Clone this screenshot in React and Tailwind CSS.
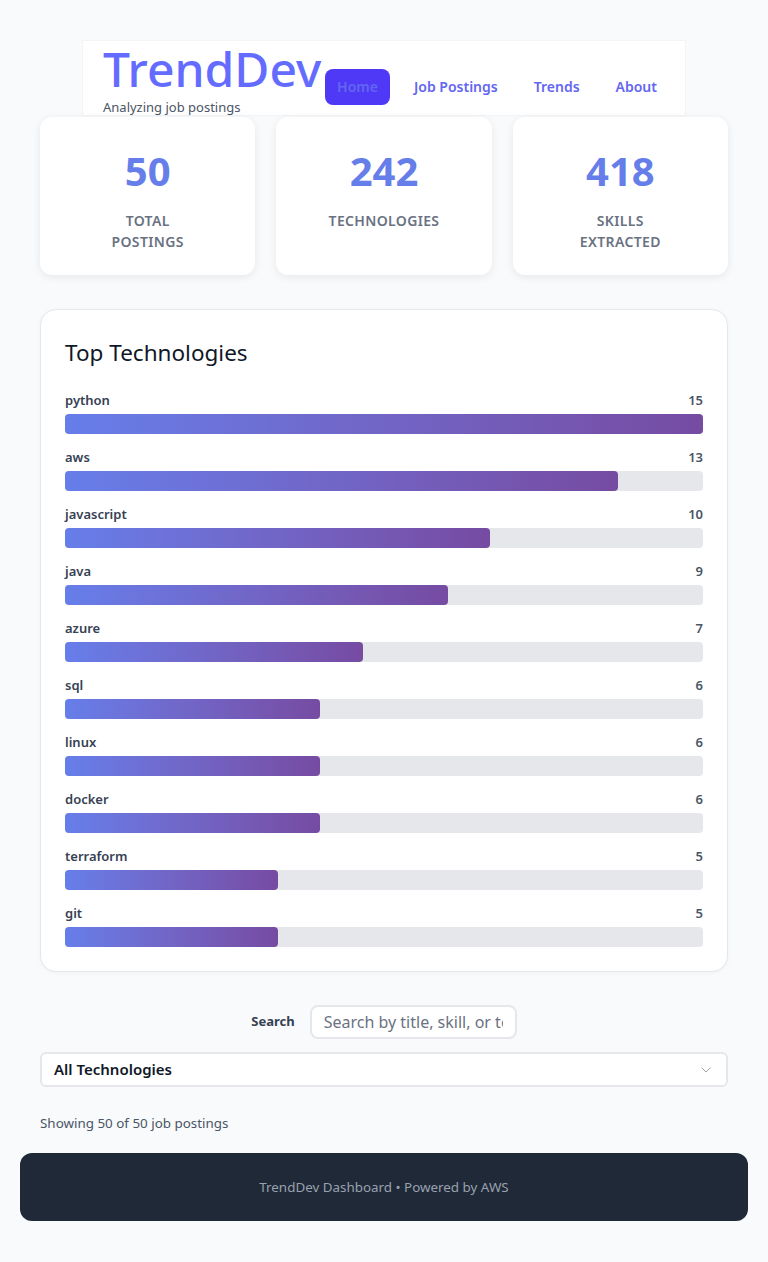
import React from 'react';
import { ChevronDown } from 'lucide-react';

const stats = [
  { value: 50, label: ['Total', 'Postings'] },
  { value: 242, label: ['Technologies'] },
  { value: 418, label: ['Skills', 'Extracted'] },
];

const technologies = [
  { name: 'python', count: 15 },
  { name: 'aws', count: 13 },
  { name: 'javascript', count: 10 },
  { name: 'java', count: 9 },
  { name: 'azure', count: 7 },
  { name: 'sql', count: 6 },
  { name: 'linux', count: 6 },
  { name: 'docker', count: 6 },
  { name: 'terraform', count: 5 },
  { name: 'git', count: 5 },
];

const font = { fontFamily: '"Segoe UI", "Noto Sans", "Open Sans", sans-serif' };

function Header() {
  return (
    <header className="mx-[42px] h-[76px] bg-white border border-gray-100 flex items-start justify-between pl-5 pr-4 pt-1">
      <div className="shrink-0">
        <h1 className="text-[48px] leading-none font-medium text-[#646cff]">TrendDev</h1>
        <p className="mt-1 text-[13px] leading-5 text-gray-600">Analyzing job postings</p>
      </div>
      <nav className="mt-6 flex gap-3 shrink-0 whitespace-nowrap">
        <a className="px-3 py-2 rounded-lg bg-[#4f39f6] text-[#6366f1] text-sm font-semibold leading-5">Home</a>
        <a className="px-3 py-2 rounded-lg text-[#6366f1] text-sm font-semibold leading-5">Job Postings</a>
        <a className="px-3 py-2 rounded-lg text-[#6366f1] text-sm font-semibold leading-5">Trends</a>
        <a className="px-3 py-2 rounded-lg text-[#6366f1] text-sm font-semibold leading-5">About</a>
      </nav>
    </header>
  );
}

function StatCard({ value, label }) {
  return (
    <div className="bg-white rounded-xl shadow-[0_2px_8px_rgba(0,0,0,0.08)] pt-[30px] pb-[23px] text-center">
      <div className="text-[40px] leading-[48px] font-bold text-[#667eea]">{value}</div>
      <div className="mt-[15px] text-sm leading-[21px] font-semibold uppercase tracking-wide text-gray-500">
        {label.map((l) => (
          <div key={l}>{l}</div>
        ))}
      </div>
    </div>
  );
}

function TopTechnologies() {
  const max = Math.max(...technologies.map((t) => t.count));
  return (
    <section className="mt-[34px] bg-white rounded-2xl border border-gray-200 shadow-[0_1px_4px_rgba(0,0,0,0.04)] px-6 pt-[26px] pb-6">
      <h2 className="text-[22.5px] leading-[33px] text-gray-900">Top Technologies</h2>
      <div className="mt-[21px] flex flex-col gap-[13px]">
        {technologies.map((t) => (
          <div key={t.name}>
            <div className="flex justify-between text-[13px] leading-5 font-semibold">
              <span className="text-gray-700">{t.name}</span>
              <span className="text-gray-600">{t.count}</span>
            </div>
            <div className="mt-1 h-5 rounded bg-gray-200">
              <div
                className="h-5 rounded bg-linear-to-r from-[#667eea] to-[#764ba2]"
                style={{ width: `${(t.count / max) * 100}%` }}
              />
            </div>
          </div>
        ))}
      </div>
    </section>
  );
}

export default function App() {
  return (
    <div className="min-h-screen bg-[#f8fafc] px-5 pt-10 pb-10" style={font}>
      <div className="px-5">
        <Header />
        <div className="mt-px grid grid-cols-3 gap-[21px]">
          {stats.map((s) => (
            <StatCard key={s.value} {...s} />
          ))}
        </div>
        <TopTechnologies />

        {/* Filters */}
        <div className="mt-[33px] flex items-center justify-center gap-[15px]">
          <label className="text-[13px] font-bold text-gray-700">Search</label>
          <input
            className="w-[207px] h-[34px] px-3 rounded-lg border-2 border-gray-200 bg-white text-base placeholder:text-gray-500 outline-none"
            placeholder="Search by title, skill, or technology"
          />
        </div>
        <div className="mt-[13px] h-[35px] bg-white border-2 border-gray-200 rounded-md flex items-center justify-between px-3">
          <span className="text-[15px] font-semibold text-gray-900">All Technologies</span>
          <ChevronDown className="w-4 h-4 text-gray-400" strokeWidth={1.5} />
        </div>
        <p className="mt-[26px] text-[13.4px] leading-5 text-gray-600">Showing 50 of 50 job postings</p>
      </div>

      <footer className="mt-5 bg-[#1f2937] rounded-xl py-6 text-center text-[13.4px] leading-5 text-gray-400">
        TrendDev Dashboard • Powered by AWS
      </footer>
    </div>
  );
}
